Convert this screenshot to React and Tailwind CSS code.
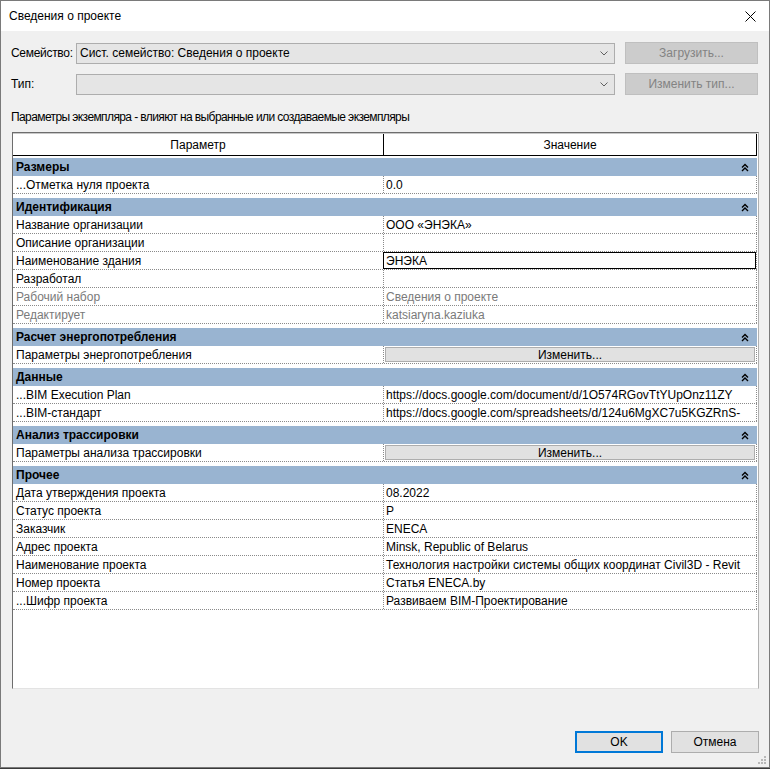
import React from 'react'

const groups = [
  { title: 'Размеры', rows: [{ p: '...Отметка нуля проекта', v: '0.0' }] },
  {
    title: 'Идентификация',
    rows: [
      { p: 'Название организации', v: 'ООО «ЭНЭКА»' },
      { p: 'Описание организации', v: '' },
      { p: 'Наименование здания', v: 'ЭНЭКА', edit: true },
      { p: 'Разработал', v: '' },
      { p: 'Рабочий набор', v: 'Сведения о проекте', dim: true },
      { p: 'Редактирует', v: 'katsiaryna.kaziuka', dim: true },
    ],
  },
  { title: 'Расчет энергопотребления', rows: [{ p: 'Параметры энергопотребления', button: true }] },
  {
    title: 'Данные',
    rows: [
      { p: '...BIM Execution Plan', v: 'https://docs.google.com/document/d/1O574RGovTtYUpOnz11ZY' },
      { p: '...BIM-стандарт', v: 'https://docs.google.com/spreadsheets/d/124u6MgXC7u5KGZRnS-' },
    ],
  },
  { title: 'Анализ трассировки', rows: [{ p: 'Параметры анализа трассировки', button: true }] },
  {
    title: 'Прочее',
    rows: [
      { p: 'Дата утверждения проекта', v: '08.2022' },
      { p: 'Статус проекта', v: 'Р' },
      { p: 'Заказчик', v: 'ENECA' },
      { p: 'Адрес проекта', v: 'Minsk, Republic of Belarus' },
      { p: 'Наименование проекта', v: 'Технология настройки системы общих координат Civil3D - Revit' },
      { p: 'Номер проекта', v: 'Статья ENECA.by' },
      { p: '...Шифр проекта', v: 'Развиваем BIM-Проектирование' },
    ],
  },
]

const Chevron = () => (
  <svg width="10" height="7" viewBox="0 0 10 7" className="text-[#606060]">
    <path d="M1.5 1.5 L5 5 L8.5 1.5" fill="none" stroke="currentColor" strokeWidth="1" />
  </svg>
)

const CollapseIcon = () => (
  <svg width="8" height="9" viewBox="0 0 8 9">
    <path d="M1 4.5 L4 1.5 L7 4.5 M1 8 L4 5 L7 8" fill="none" stroke="#000" strokeWidth="1.4" />
  </svg>
)

const Combo = ({ text }) => (
  <div className="w-[539px] h-[21px] bg-[#e5e5e5] border border-[#adadad] flex items-center justify-between pl-[3px] pr-[5px]">
    <span>{text}</span>
    <Chevron />
  </div>
)

const DisabledButton = ({ label }) => (
  <div className="ml-[10px] w-[133px] h-[22px] bg-[#cccccc] border border-[#bfbfbf] text-[#838383] flex items-center justify-center">
    {label}
  </div>
)

const Row = ({ row }) => (
  <div className="flex h-[18px] w-[744px] border-b border-dotted border-[#8a8a8a] bg-white">
    <div
      className={`w-[371px] shrink-0 border-r border-dotted border-[#8a8a8a] pl-[3px] pt-[1px] leading-[16px] whitespace-nowrap overflow-hidden ${
        row.dim ? 'text-[#7a7a7a]' : 'text-black'
      }`}
    >
      {row.p}
    </div>
    <div className="flex-1 min-w-0 border-r border-dotted border-[#8a8a8a] relative">
      {row.button ? (
        <div className="absolute inset-x-[1px] top-[1px] bottom-[1px] bg-[#e1e1e1] border border-[#adadad] flex items-center justify-center">
          Изменить...
        </div>
      ) : row.edit ? (
        <div className="absolute inset-0 -left-[1px] border border-black pl-[2px] leading-[16px] bg-white">{row.v}</div>
      ) : (
        <div
          className={`pl-[2px] pt-[1px] leading-[16px] whitespace-nowrap overflow-hidden ${
            row.dim ? 'text-[#7a7a7a]' : 'text-black'
          }`}
        >
          {row.v}
        </div>
      )}
    </div>
  </div>
)

export default function App() {
  return (
    <div className="w-[770px] h-[769px] bg-[#3a3a3a] font-['Liberation_Sans',Arial,sans-serif] text-[12px] text-black">
      <div className="w-[770px] h-[768px] border border-[#7a7a7a] bg-[#f0f0f0] flex flex-col relative">
        {/* Title bar */}
        <div className="h-[30px] bg-white flex items-center justify-between pl-[8px] pr-[13px] shrink-0">
          <span className="leading-none">Сведения о проекте</span>
          <svg width="11" height="11" viewBox="0 0 11 11">
            <path d="M0.5 0.5 L10.5 10.5 M10.5 0.5 L0.5 10.5" stroke="#000" strokeWidth="1" />
          </svg>
        </div>

        {/* Family / type */}
        <div className="flex items-center mt-[11px] pl-[10px]">
          <span className="w-[65px] tracking-[-0.3px]">Семейство:</span>
          <Combo text="Сист. семейство: Сведения о проекте" />
          <DisabledButton label="Загрузить..." />
        </div>
        <div className="flex items-center mt-[9px] pl-[10px]">
          <span className="w-[65px]">Тип:</span>
          <Combo text="" />
          <DisabledButton label="Изменить тип..." />
        </div>

        <div className="mt-[14px] pl-[10px] leading-[16px] tracking-[-0.6px]">
          Параметры экземпляра - влияют на выбранные или создаваемые экземпляры
        </div>

        {/* Property grid */}
        <div className="ml-[11px] mt-[7px] w-[747px] h-[557px] bg-white border-l border-t border-[#6d6d6d] border-r border-r-[#b0b0b0] border-b border-b-[#e3e3e3] overflow-hidden">
          <div className="flex h-[23px] w-[744px] border-t border-[#c8c8c8]">
            <div className="w-[371px] shrink-0 border-r border-b border-black flex items-center justify-center">
              Параметр
            </div>
            <div className="flex-1 border-r border-b border-black flex items-center justify-center">Значение</div>
          </div>
          <div className="pt-[2px] flex flex-col gap-[4px]">
            {groups.map((g) => (
              <div key={g.title} className="flex flex-col">
                <div className="h-[18px] w-[744px] bg-[#99b4d1] flex items-center justify-between pl-[3px] pr-[8px]">
                  <span className="font-bold">{g.title}</span>
                  <CollapseIcon />
                </div>
                {g.rows.map((r) => (
                  <Row key={r.p} row={r} />
                ))}
              </div>
            ))}
          </div>
        </div>

        {/* Bottom buttons */}
        <div className="flex justify-end mt-[42px] pr-[10px] gap-[8px]">
          <div className="w-[88px] h-[22px] bg-[#e1e1e1] border-2 border-[#0078d7] flex items-center justify-center">
            OK
          </div>
          <div className="w-[88px] h-[22px] bg-[#e1e1e1] border border-[#adadad] flex items-center justify-center">
            Отмена
          </div>
        </div>

        {/* Size grip */}
        <svg width="10" height="10" viewBox="0 0 10 10" className="absolute right-[2px] bottom-[2px]">
          {[
            [8, 2],
            [5, 5],
            [8, 5],
            [2, 8],
            [5, 8],
            [8, 8],
          ].map(([x, y]) => (
            <rect key={`${x}-${y}`} x={x - 1} y={y - 1} width="2" height="2" fill="#b8b8b8" />
          ))}
        </svg>
      </div>
    </div>
  )
}
